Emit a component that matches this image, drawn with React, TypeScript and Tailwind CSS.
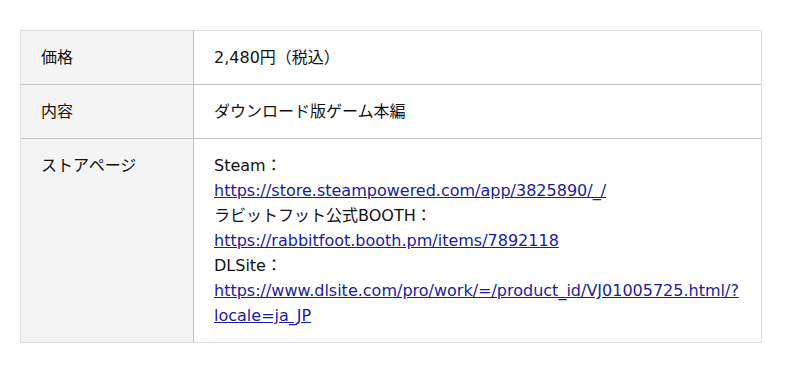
const font = { fontFamily: '"DejaVu Sans", "Noto Sans CJK JP", sans-serif' };

const linkCls = 'text-[#1b1b9e] underline';

export default function App() {
  return (
    <div className="bg-white w-[800px] h-[373px] pt-[30px] px-[20px]" style={font}>
      <table className="w-[742px] border-collapse text-[16px] leading-[25px] text-[#111]">
        <tbody>
          <tr className="border-b border-[#c4c4c4]">
            <th className="w-[173px] bg-[#f4f4f4] border-t border-l border-[#ddd] border-r border-r-[#c4c4c4] px-[20px] py-[14px] text-left font-normal align-top">
              価格
            </th>
            <td className="border-t border-r border-[#ddd] px-[20px] py-[14px] align-top">2,480円（税込）</td>
          </tr>
          <tr className="border-b border-[#c4c4c4]">
            <th className="bg-[#f4f4f4] border-l border-[#ddd] border-r border-r-[#c4c4c4] px-[20px] py-[14px] text-left font-normal align-top">
              内容
            </th>
            <td className="border-r border-[#ddd] px-[20px] py-[14px] align-top">ダウンロード版ゲーム本編</td>
          </tr>
          <tr>
            <th className="bg-[#f4f4f4] border-l border-b border-[#ddd] border-r border-r-[#c4c4c4] px-[20px] py-[14px] text-left font-normal align-top">
              ストアページ
            </th>
            <td className="border-r border-b border-[#ddd] px-[20px] py-[14px] align-top">
              Steam：<br />
              <a className={linkCls} href="#">https://store.steampowered.com/app/3825890/_/</a>
              <br />
              ラビットフット公式BOOTH：<br />
              <a className={linkCls} href="#">https://rabbitfoot.booth.pm/items/7892118</a>
              <br />
              DLSite：<br />
              <a className={linkCls} href="#">https://www.dlsite.com/pro/work/=/product_id/VJ01005725.html/?locale=ja_JP</a>
            </td>
          </tr>
        </tbody>
      </table>
    </div>
  );
}
